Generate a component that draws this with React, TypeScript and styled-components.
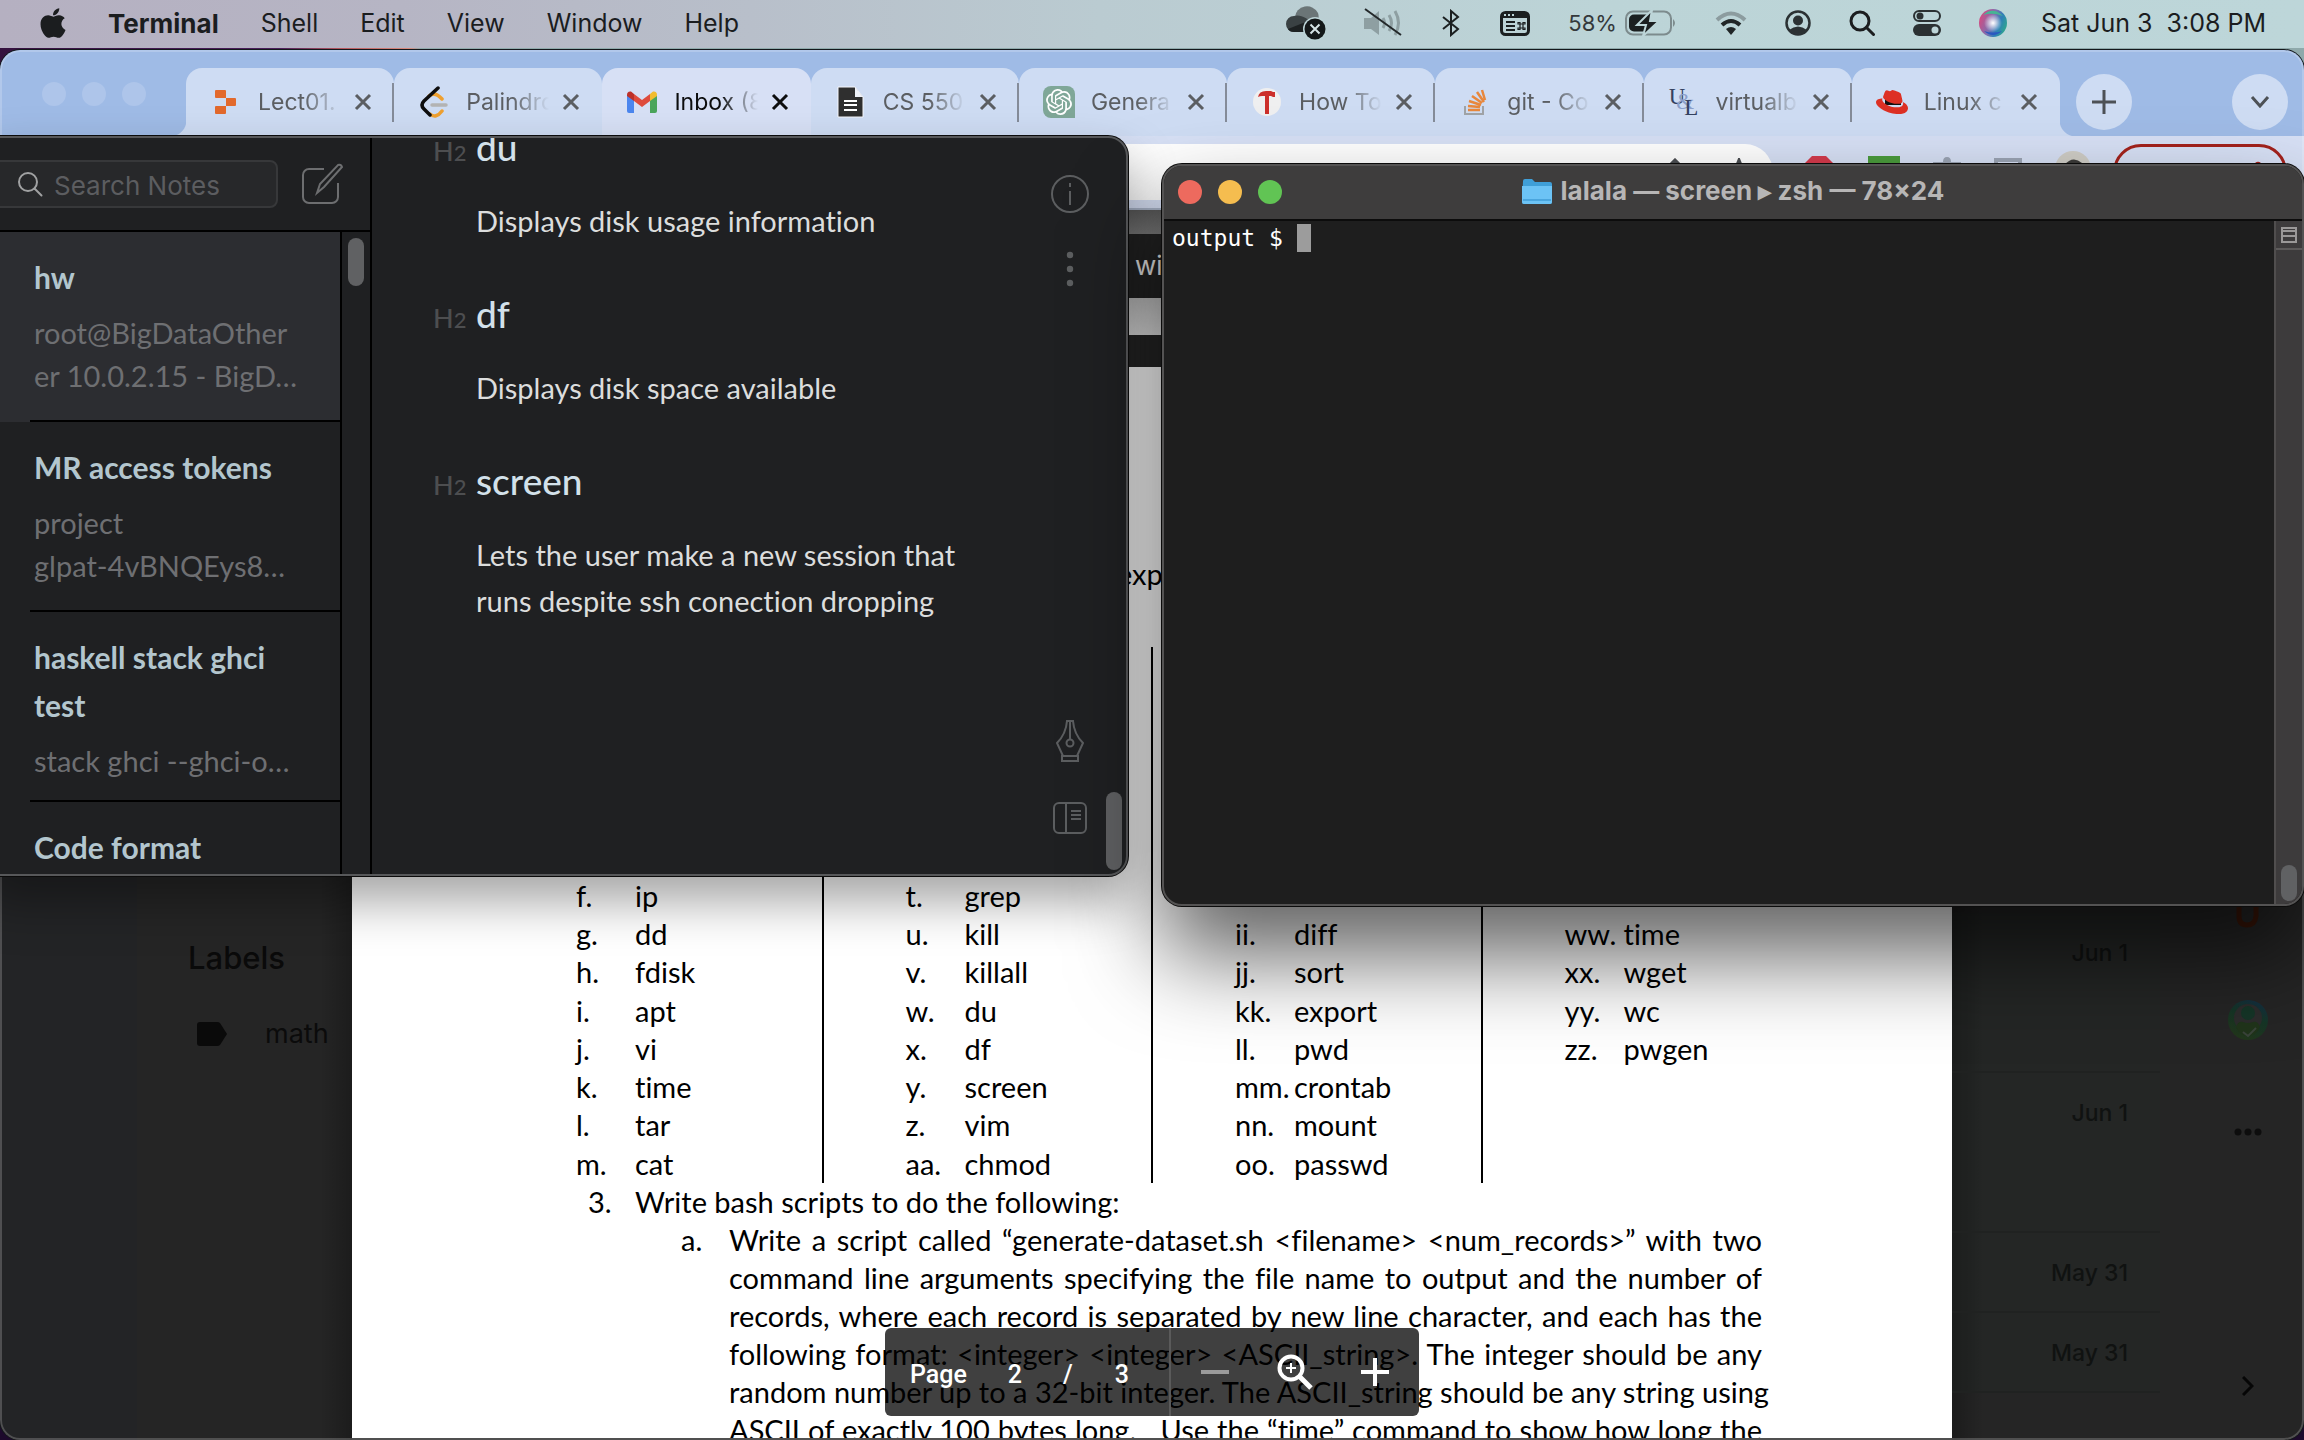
import React from 'react';
import styled, { createGlobalStyle } from 'styled-components';
import { FaApple, FaRedhat } from 'react-icons/fa';
import { SiOpenai } from 'react-icons/si';

const ui = '"Inter", "Liberation Sans", sans-serif';
const humanist = '"Lato", "Open Sans", sans-serif';

const GlobalStyle = createGlobalStyle`
  * { box-sizing: border-box; }
  html, body { margin: 0; }
  body { overflow: hidden; background: #1d0f2b; font-family: ${ui}; }
  button { margin: 0; padding: 0; border: 0; background: none; color: inherit; font: inherit; }
  input { margin: 0; padding: 0; border: 0; background: none; color: inherit; font: inherit; outline: 0; }
  ul, ol, p, h2, h3 { margin: 0; padding: 0; list-style: none; font-weight: inherit; }
  svg { display: block; flex: none; }
`;

/* ---------- desktop and menu bar ---------- */

const Desktop = styled.div`
  position: relative;
  display: flex;
  flex-direction: column;
  height: 100vh;
  overflow: hidden;
  background: linear-gradient(90deg, #35123f 0, #4b1f5c 280px, #b5555c 340px, #d98a7c 410px, #8fa9ab 420px, #8fa9ab 100%) top / 100% 80px no-repeat #1d0a2c;
`;

const MenuBar = styled.header`
  display: flex;
  justify-content: space-between;
  align-items: center;
  flex: none;
  height: 48px;
  padding: 0 38px 2px 40px;
  color: #1b1d1f;
  font-size: 25px;
  background: linear-gradient(90deg, #b5b0c1 0, #b6b5c4 400px, #b8bfca 750px, #bacbd1 1100px, #bcd4d7 1600px, #bdd6d9 100%);
`;

const MenuItems = styled.nav`
  display: flex;
  align-items: center;
  gap: 42px;
`;

const AppleMark = styled(FaApple)`
  width: 26px;
  height: 34px;
`;

const MenuButton = styled.button<{ $strong?: boolean }>`
  font-size: ${(p) => (p.$strong ? 26 : 25)}px;
  font-weight: ${(p) => (p.$strong ? 700 : 400)};
`;

const StatusItems = styled.div`
  display: flex;
  align-items: center;
  gap: 38px;
`;

const BatteryStatus = styled.div`
  display: flex;
  align-items: center;
  gap: 8px;
  font-size: 22px;
  color: #34393b;
`;

const Clock = styled.time`
  white-space: pre;
  margin-left: -4px;
`;

/* ---------- browser window ---------- */

const Browser = styled.main`
  position: relative;
  display: flex;
  flex-direction: column;
  flex: 1;
  min-height: 0;
  margin-top: 2px;
  border-radius: 20px;
  overflow: hidden;
  background: #252525;
  box-shadow: 0 0 0 1px #14181c;

  &::after {
    content: '';
    position: absolute;
    inset: 0;
    border-radius: 20px;
    box-shadow: inset 0 0 0 2px rgba(255, 255, 255, 0.2);
    pointer-events: none;
  }
`;

const TabStrip = styled.div`
  display: flex;
  flex: none;
  height: 86px;
  padding-top: 18px;
  background: #9fbbe6;
`;

const StripStart = styled.div`
  display: flex;
  gap: 16px;
  width: 186px;
  padding: 14px 0 0 42px;
  background: radial-gradient(circle at 0 0, transparent 16px, #cedcf3 17px) bottom right / 16px 16px no-repeat;
`;

const StripEnd = styled.div`
  display: flex;
  justify-content: space-between;
  width: 244px;
  padding: 6px 16px;
  background: radial-gradient(circle at 100% 0, transparent 16px, #cedcf3 17px) bottom left / 16px 16px no-repeat;
`;

const Light = styled.span<{ $color: string }>`
  width: 24px;
  height: 24px;
  border-radius: 50%;
  background: ${(p) => p.$color};
`;

const RoundButton = styled.button`
  display: grid;
  place-items: center;
  width: 56px;
  height: 56px;
  border-radius: 50%;
  background: #cedcf3;
  color: #4d5156;
`;

const Tabs = styled.div`
  display: flex;
  flex: 1;
  min-width: 0;
`;

const Tab = styled.div<{ $active?: boolean; $divider?: boolean }>`
  display: flex;
  align-items: center;
  flex: 1;
  min-width: 0;
  padding: 0 22px 0 24px;
  border-radius: 16px 16px 0 0;
  color: ${(p) => (p.$active ? '#0c0d0e' : '#5b5e62')};
  background:
    linear-gradient(#858c99, #858c99) right 15px / 2px ${(p) => (p.$divider ? '39px' : '0')} no-repeat,
    ${(p) => (p.$active ? '#d7e0f5' : '#cedcf3')};
`;

const TabIcon = styled.span`
  display: grid;
  place-items: center;
  width: 32px;
  flex: none;
`;

const TabLabel = styled.span`
  flex: 1;
  min-width: 0;
  margin: 0 13px 0 16px;
  overflow: hidden;
  white-space: nowrap;
  font-size: 23px;
  line-height: 32px;
  mask-image: linear-gradient(90deg, #000 55%, transparent 100%);
`;

const AddressRow = styled.div`
  display: flex;
  flex: none;
  height: 74px;
  padding: 8px 17px 10px;
  background: #d7e0f5;
  border-bottom: 2px solid #a9b4c8;
`;

const AddressBox = styled.div`
  display: flex;
  justify-content: flex-end;
  gap: 32px;
  flex: 1;
  padding: 14px 18px 0 0;
  border-radius: 28px;
  height: 56px;
  background: #fff;
  color: #4a4d51;
`;

const Extensions = styled.div`
  display: flex;
  justify-content: space-around;
  width: 320px;
  margin: 0 6px 0 14px;
`;

const UpdatePill = styled.button`
  display: flex;
  justify-content: flex-end;
  width: 174px;
  height: 56px;
  padding: 14px 22px;
  border: 3px solid #a3221c;
  border-radius: 28px;
`;

/* ---------- mail page behind the viewer ---------- */

const Viewer = styled.div`
  display: flex;
  flex: 1;
  min-height: 0;
  color: #0a0a0a;
`;

const MailNav = styled.aside`
  flex: 1 1 352px;
  min-width: 0;
  padding: 724px 0 0 188px;
  background:
    linear-gradient(90deg, transparent, rgba(0, 0, 0, 0.25)) right / 32px 100% no-repeat,
    linear-gradient(90deg, #232426 137px, #252525 137px);
`;

const NavTitle = styled.h2`
  font: 500 31px/48px ${ui};
`;

const NavLink = styled.a`
  display: flex;
  align-items: center;
  gap: 38px;
  padding: 32px 0 0 9px;
  color: #0b0b0b;
  font-size: 27px;
  line-height: 40px;
  text-decoration: none;
`;

const MailSide = styled.aside`
  display: flex;
  flex: 1 1 352px;
  min-width: 0;
  background: linear-gradient(270deg, transparent, rgba(0, 0, 0, 0.25)) left / 32px 100% no-repeat #252525;
`;

const MailList = styled.ul`
  width: 208px;
  flex: none;
  padding-top: 703px;
`;

const MailRow = styled.li<{ $tall?: boolean }>`
  height: ${(p) => (p.$tall ? 160 : 80)}px;
  padding: 24px 32px 0 0;
  border-bottom: 2px solid #202221;
  background: rgba(30, 42, 36, 0.16);
  color: #101211;
  font: 500 23px/32px ${ui};
  text-align: right;
`;

const AddOns = styled.div`
  display: flex;
  flex: 1;
  flex-direction: column;
  align-items: center;
  padding: 684px 0 40px 32px;
`;

const Spacer = styled.div<{ $size?: number }>`
  ${(p) => (p.$size ? `height: ${p.$size}px; flex: none;` : 'flex: 1;')}
`;

/* ---------- PDF document ---------- */

const PdfColumn = styled.section`
  position: relative;
  width: 1600px;
  flex: none;
  color: #000;
  font: 29px/38px ${humanist};
  font-variant-ligatures: none;
`;

const MailStrip = styled.div`
  height: 24px;
  background: linear-gradient(#5a5a5a, #787878);
`;

const ViewerBar = styled.div`
  height: 64px;
  padding: 13px 0 0 783px;
  background: #222;
  color: #e8e8e8;
  font: 26px/38px ${ui};
`;

const PreviousPage = styled.div`
  height: 37px;
  margin-bottom: 32px;
  background: linear-gradient(#c0c0c0, #e0e0e0);
`;

const Page = styled.article`
  padding: 188px 190px 0 142px;
  height: 1071px;
  overflow: hidden;
  background: #fff;
`;

const Prompt = styled.p`
  padding-left: 623px;
  margin-bottom: 54px;
`;

const Columns = styled.div`
  display: grid;
  grid-template-columns: repeat(4, 1fr);
  height: 536px;
  margin-right: -50px;
`;

const CommandList = styled.ol`
  display: grid;
  grid-template-rows: repeat(14, 1fr);
  height: 536px;
  padding-left: 82px;

  &:not(:last-child) { border-right: 2px solid #000; }
`;

const Command = styled.li<{ $row: number }>`
  grid-row: ${(p) => p.$row};
  display: grid;
  grid-template-columns: 59px 1fr;
`;

const Task = styled.div<{ $indent: number; $marker: number }>`
  display: grid;
  grid-template-columns: ${(p) => p.$marker}px minmax(0, 1fr);
  padding-left: ${(p) => p.$indent}px;
`;

const Line = styled.span`
  display: block;
  white-space: nowrap;
  text-align: justify;
  text-align-last: justify;
`;

const PdfControls = styled.div`
  position: absolute;
  left: 533px;
  bottom: 24px;
  display: flex;
  align-items: center;
  width: 534px;
  height: 88px;
  border-radius: 6px;
  background: rgba(0, 0, 0, 0.75);
  color: #fff;
  font: 500 25px/32px "Roboto", sans-serif;
`;

const PageField = styled.div`
  display: flex;
  align-items: center;
  width: 286px;
  height: 88px;
  padding: 5px 0 0 25px;
  border-right: 2px solid #5a5a5a;
`;

const PageInput = styled.input`
  width: 96px;
  text-align: center;
`;

const PageTotal = styled.span`
  margin-left: 42px;
`;

const ZoomButtons = styled.div`
  display: flex;
  justify-content: space-between;
  flex: 1;
  padding: 0 28px;
`;

/* ---------- notes window ---------- */

const NotesWindow = styled.section`
  position: absolute;
  left: -20px;
  top: 136px;
  display: flex;
  width: 1148px;
  height: 740px;
  border: 2px solid #57585a;
  border-radius: 20px;
  overflow: hidden;
  background: #1f2022;
  box-shadow: 0 0 0 1px #0b0b0b, 0 25px 50px rgba(0, 0, 0, 0.36);
  font-family: ${humanist};
  font-variant-ligatures: none;
`;

const Sidebar = styled.div`
  display: flex;
  flex-direction: column;
  width: 390px;
  flex: none;
  border-right: 2px solid #000;
`;

const SearchRow = styled.div`
  display: flex;
  align-items: center;
  gap: 24px;
  flex: none;
  height: 94px;
  padding: 0 26px 0 0;
  border-bottom: 2px solid #000;
  color: #6d6e70;
`;

const SearchField = styled.label`
  display: flex;
  align-items: center;
  gap: 11px;
  flex: 1;
  height: 48px;
  padding-left: 33px;
  border: 2px solid #37383a;
  border-radius: 8px;
  background: #27282a;
  color: #a0a1a2;
`;

const SearchInput = styled.input`
  width: 200px;
  padding-top: 3px;
  font: 26px/32px ${ui};
  &::placeholder { color: #5c5d60; opacity: 1; }
`;

const ListPane = styled.div`
  display: flex;
  flex: 1;
  min-height: 0;
`;

const NoteList = styled.ul`
  width: 360px;
  border-right: 2px solid #000;
  overflow: hidden;
`;

const NoteItem = styled.li<{ $selected?: boolean }>`
  height: 190px;
  padding-left: 48px;
  background: ${(p) => (p.$selected ? '#2c2d31' : 'transparent')};
`;

const NoteBody = styled.div`
  height: 190px;
  padding: 21px 20px 0 4px;
  border-bottom: 2px solid #000;
`;

const NoteTitle = styled.h3`
  color: #b3c6ce;
  font-size: 30px;
  font-weight: 700;
  line-height: 48px;
`;

const NotePreview = styled.p`
  margin-top: 10px;
  color: #6e6f72;
  font-size: 29px;
  line-height: 43px;
  white-space: pre-line;
`;

const Thumb = styled.span<{ $height: number }>`
  width: 16px;
  height: ${(p) => p.$height}px;
  border-radius: 8px;
  background: #606163;
`;

const Track = styled.div<{ $end?: boolean }>`
  display: flex;
  justify-content: center;
  align-items: ${(p) => (p.$end ? 'flex-end' : 'flex-start')};
  width: ${(p) => (p.$end ? 24 : 28)}px;
  padding: 6px 0 4px;
`;

const Editor = styled.div`
  flex: 1;
  min-width: 0;
  overflow: hidden;
`;

const Entry = styled.div`
  width: 660px;
  margin: -15px 0 61px;
  padding-left: 61px;
`;

const EntryHeading = styled.h2`
  display: grid;
  grid-template-columns: 43px 1fr;
  align-items: baseline;
  height: 48px;
  margin-bottom: 27px;
  color: #d3e1ea;
  font-size: 37px;
  font-weight: 500;
  line-height: 48px;
`;

const Level = styled.span`
  color: #4d4e50;
  font-size: 27px;
  small { font-size: 22px; }
`;

const EntryText = styled.p`
  padding-left: 43px;
  color: #dcdddd;
  font-size: 29px;
  line-height: 46px;
  white-space: pre-line;
`;

const ToolRail = styled.div`
  display: flex;
  flex-direction: column;
  align-items: center;
  width: 40px;
  margin-right: 12px;
  padding: 37px 0 40px;
  color: #5c5e60;
`;

/* ---------- terminal window ---------- */

const TerminalWindow = styled.section`
  position: absolute;
  top: 164px;
  right: 0;
  display: flex;
  flex-direction: column;
  width: 1142px;
  height: 742px;
  border: 2px solid #545353;
  border-radius: 20px;
  overflow: hidden;
  background: #1e1e1e;
  box-shadow: 0 0 0 1px #0b0b0b, 0 50px 90px rgba(0, 0, 0, 0.62);
`;

const TitleBar = styled.div`
  display: grid;
  grid-template-columns: 1fr auto 1fr;
  align-items: center;
  flex: none;
  height: 55px;
  padding: 0 14px 2px;
  border-bottom: 2px solid #0c0c0c;
  background: #3e3d3d;
`;

const Lights = styled.div`
  display: flex;
  gap: 16px;
`;

const Title = styled.h2`
  display: flex;
  align-items: center;
  gap: 9px;
  padding-bottom: 2px;
  color: #b7b6b6;
  font-size: 26px;
  font-weight: 700;
  line-height: 32px;
`;

const TerminalBody = styled.div`
  display: flex;
  flex: 1;
  min-height: 0;
`;

const Shell = styled.pre`
  display: flex;
  flex: 1;
  margin: 0;
  padding: 3px 8px;
  color: #fff;
  font: 23px/28px "DejaVu Sans Mono", monospace;
`;

const Cursor = styled.span`
  width: 14px;
  height: 28px;
  background: #9c9c9c;
`;

const Gutter = styled.div`
  display: flex;
  flex-direction: column;
  justify-content: space-between;
  align-items: center;
  width: 28px;
  padding-bottom: 3px;
  border-left: 2px solid #504e4e;
  background: #3d3b3c;
`;

const SplitButton = styled.button`
  display: grid;
  place-items: center;
  width: 26px;
  height: 29px;
  border-bottom: 2px solid #5c5a5a;
  color: #9a9898;
`;

/* ---------- small drawings ---------- */

const Cross = () => (
  <svg width="18" height="18" viewBox="0 0 18 18" fill="none" stroke="currentColor" strokeWidth="3">
    <path d="M2 2l14 14M16 2L2 16" />
  </svg>
);

const CloudOff = () => (
  <svg width="40" height="36" viewBox="0 0 40 36">
    <path d="M9 12a12 11 0 0 1 23-4c1 3 1 7-1 9L12 18z" fill="#6b7577" />
    <path d="M8 11c6-2 14 2 19 8l-8 8H8a8 8 0 0 1 0-16z" fill="#3a4143" />
    <path d="M2 24l20-8 6 6-8 5H8c-3 0-5-1-6-3z" fill="#1d2122" />
    <circle cx="29" cy="24" r="12" fill="#bcd3d6" />
    <circle cx="29" cy="24" r="10.500" fill="#141819" />
    <path d="M24.500 19.500l9 9m0-9l-9 9" stroke="#d6e4e6" strokeWidth="2" />
  </svg>
);

const Muted = () => (
  <svg width="38" height="30" viewBox="0 0 38 30" fill="none">
    <path d="M0 10h7l8-7v24l-8-6H0z" fill="#8e9fa2" />
    <path d="M19 10q3 5 0 10M25 7q5 8 0 16M31 3q7 12 0 24" stroke="#8e9fa2" strokeWidth="3" />
    <path d="M1 1l36 26" stroke="#23282a" strokeWidth="2" />
  </svg>
);

const BluetoothIcon = () => (
  <svg width="22" height="28" viewBox="0 0 22 28" fill="none" stroke="#1b1f20" strokeWidth="2">
    <path d="M3 8l15 12-7 6V2l7 6L3 20" />
  </svg>
);

const ShortcutIcon = () => (
  <svg width="30" height="25" viewBox="0 0 30 25" fill="none">
    <rect x="1.500" y="1.500" width="27" height="22" rx="4" stroke="#1b1f20" strokeWidth="3" />
    <path d="M2 2h26v5H2z" fill="#1b1f20" />
    <path d="M4 4h2M8 4h2M12 4h2" stroke="#bdd5d8" strokeWidth="2" />
    <path d="M6 11h9M6 15h9M6 19h9" stroke="#1b1f20" strokeWidth="2" />
    <path d="M20 13h3v4h-3zM20 13v-1.500h-2V13zM23 13v-1.500h2V13zM20 17v1.500h-2V17zM23 17v1.500h2V17z" stroke="#1b1f20" strokeWidth="1.200" />
  </svg>
);

const Battery = () => (
  <svg width="52" height="26" viewBox="0 0 52 26" fill="none">
    <rect x="1" y="1.500" width="45" height="23" rx="7" stroke="#7d8b8d" strokeWidth="2" />
    <path d="M9 4.500h14v17H9a5 5 0 0 1-5-5v-7a5 5 0 0 1 5-5z" fill="#1b1f20" />
    <path d="M48 9q4 4 0 8z" fill="#7d8b8d" />
    <path d="M27 0L12 15h9l-3 11 16-15h-9z" fill="#1b1f20" stroke="#bdd5d8" strokeWidth="2" />
  </svg>
);

const Wifi = () => (
  <svg width="32" height="24" viewBox="0 0 32 24" fill="none" strokeWidth="4">
    <path d="M2 9q14-13 28 0" stroke="#8c9c9f" />
    <path d="M7 14q9-8 18 0" stroke="#202526" />
    <path d="M11 18q5-4 10 0l-5 6z" fill="#202526" />
  </svg>
);

const UserIcon = () => (
  <svg width="26" height="26" viewBox="0 0 26 26" fill="none">
    <circle cx="13" cy="13" r="11.500" stroke="#2b3133" strokeWidth="2.500" />
    <circle cx="13" cy="10.500" r="5" fill="#2b3133" />
    <path d="M4 20q9-7 18 0-9 8-18 0z" fill="#2b3133" />
  </svg>
);

const Lens = ({ size = 26, width = 3 }: { size?: number; width?: number }) => (
  <svg width={size} height={size} viewBox="0 0 26 26" fill="none" stroke="currentColor" strokeWidth={width}>
    <circle cx="11" cy="11" r="9" />
    <path d="M17.500 17.500l7 7" strokeLinecap="round" />
  </svg>
);

const ControlCenter = () => (
  <svg width="28" height="26" viewBox="0 0 28 26" fill="none">
    <rect x="1" y="1" width="26" height="10" rx="5" stroke="#2b3133" strokeWidth="2" />
    <circle cx="7" cy="6" r="3.500" fill="#2b3133" />
    <rect x="0" y="14" width="28" height="12" rx="6" fill="#2b3133" />
    <circle cx="22" cy="20" r="3.500" fill="#bdd5d8" />
  </svg>
);

const Siri = () => (
  <svg width="28" height="28" viewBox="0 0 28 28">
    <defs>
      <linearGradient id="siri" x1="0" y1=".3" x2="1" y2=".7">
        <stop offset="0" stopColor="#d8497f" />
        <stop offset=".45" stopColor="#7d6fb0" />
        <stop offset=".7" stopColor="#2f7fb8" />
        <stop offset="1" stopColor="#2fa98a" />
      </linearGradient>
      <radialGradient id="glow">
        <stop offset="0" stopColor="#fff" />
        <stop offset="1" stopColor="#fff" stopOpacity="0" />
      </radialGradient>
    </defs>
    <circle cx="14" cy="14" r="14" fill="url(#siri)" />
    <path d="M4 6q10-9 20 1Q14 3 4 6z" fill="#46b494" />
    <path d="M5 22q9 8 18 0-9 3-18 0z" fill="#2b58c0" />
    <circle cx="14" cy="14" r="9" fill="url(#glow)" />
  </svg>
);

const ReplitIcon = () => (
  <svg width="22" height="24" viewBox="0 0 22 24" fill="#e2692c">
    <path d="M1 0h9a1 1 0 0 1 1 1v7H1a1 1 0 0 1-1-1V1a1 1 0 0 1 1-1zM11 8h9a1 1 0 0 1 1 1v6a1 1 0 0 1-1 1h-9zM0 17a1 1 0 0 1 1-1h10v7a1 1 0 0 1-1 1H1a1 1 0 0 1-1-1z" />
  </svg>
);

const LeetCodeIcon = () => (
  <svg width="28" height="32" viewBox="0 0 28 32" fill="none" strokeWidth="3.500" strokeLinecap="round">
    <path d="M9 10q6-5 13 3M10 28q6 5 12-3" stroke="#efa02f" />
    <path d="M18 2L4 15q-4 4 0 8l6 6" stroke="#0e0e0e" />
    <path d="M12 19h14" stroke="#b3b3b3" />
  </svg>
);

const GmailIcon = () => (
  <svg width="30" height="22" viewBox="0 0 30 22">
    <path d="M0 4v16a2 2 0 0 0 2 2h5V9z" fill="#4c86ee" />
    <path d="M30 4v16a2 2 0 0 1-2 2h-5V9z" fill="#4ba55b" />
    <path d="M7 3l8 6 8-6v7l-8 6-8-6z" fill="#de4b3c" />
    <path d="M0 4q0-4 4-3.500L7 3v7L0 5z" fill="#bd3129" />
    <path d="M30 4q0-4-4-3.500L23 3v7l7-5z" fill="#f2bc2d" />
  </svg>
);

const DocIcon = () => (
  <svg width="28" height="32" viewBox="0 0 28 32">
    <path d="M1 1h17l8 10v20H1z" fill="#2f2f2f" stroke="#f6f7fb" strokeWidth="1" />
    <path d="M18 1v10h8" fill="#eef1f8" />
    <path d="M7 15h13M7 19h13M7 24h13" stroke="#fff" strokeWidth="2" />
  </svg>
);

const GptTile = styled.span`
  display: grid;
  place-items: center;
  width: 32px;
  height: 32px;
  border-radius: 8px 8px 0 8px;
  background: #7fa798;
  color: #fff;
`;

const HammerIcon = () => (
  <svg width="28" height="28" viewBox="0 0 28 28">
    <circle cx="14" cy="14" r="14" fill="#efeff0" />
    <path d="M5 9q1-6 8-6h5l2 1h2v5h-2l-2-1h-2v18h-4V8H9q-2 0-4 1z" fill="#cc2f2b" />
  </svg>
);

const StackIcon = () => (
  <svg width="24" height="26" viewBox="0 0 24 26" fill="none" strokeWidth="2">
    <path d="M2 17v8h18v-8" stroke="#a0a3a6" />
    <path d="M5 21h12M5 17l12 1M6 12l12 4M9 7l10 7M14 3l7 10M19 1l3 10" stroke="#e8873c" strokeWidth="2.500" />
  </svg>
);

const MonogramText = styled.span`
  display: flex;
  color: #34425f;
  font: 23px/20px "Liberation Serif", serif;
  span:nth-child(2) { padding-top: 5px; margin-left: -9px; color: #8ba0cb; }
  span:nth-child(3) { padding-top: 11px; margin-left: -10px; }
`;

const RedHat = styled.span`
  display: grid;
  color: #dd3024;
  background: linear-gradient(#111, #111) 9px 10px / 16px 9px no-repeat;
`;

const FolderIcon = () => (
  <svg width="30" height="26" viewBox="0 0 30 26">
    <path d="M1 3a2 2 0 0 1 2-2h7l3 3h15a2 2 0 0 1 2 2v18a2 2 0 0 1-2 2H2a2 2 0 0 1-2-2z" fill="#3f9fd8" />
    <path d="M0 8h30v16a2 2 0 0 1-2 2H2a2 2 0 0 1-2-2z" fill="#6cc3f5" />
    <path d="M1 22h28" stroke="#4aa6de" strokeWidth="2" />
  </svg>
);

const ComposeIcon = () => (
  <svg width="42" height="42" viewBox="0 0 42 42" fill="none" stroke="currentColor" strokeWidth="2">
    <path d="M22 6H7a6 6 0 0 0-6 6v22a6 6 0 0 0 6 6h23a6 6 0 0 0 6-6V20" />
    <path d="M15 30l3-9L36 2q3-1 4 2L22 24z" />
  </svg>
);

const InfoIcon = () => (
  <svg width="38" height="38" viewBox="0 0 38 38" fill="none" stroke="currentColor" strokeWidth="2">
    <circle cx="19" cy="19" r="18" />
    <path d="M19 8v4M19 16v14" />
  </svg>
);

const DotsIcon = ({ color = 'currentColor' }: { color?: string }) => (
  <svg width="8" height="36" viewBox="0 0 8 36" fill={color}>
    <circle cx="4" cy="4" r="3.200" /><circle cx="4" cy="18" r="3.200" /><circle cx="4" cy="32" r="3.200" />
  </svg>
);

const PenIcon = () => (
  <svg width="28" height="42" viewBox="0 0 28 42" fill="none" stroke="currentColor" strokeWidth="2">
    <path d="M11 1h6q1 13 10 22l-6 13H7L1 23Q10 14 11 1zM6 36h16v5H6zM14 1v18" />
    <circle cx="14" cy="23" r="3.500" />
  </svg>
);

const PanelIcon = () => (
  <svg width="34" height="32" viewBox="0 0 34 32" fill="none" stroke="currentColor" strokeWidth="2">
    <rect x="1" y="1" width="32" height="30" rx="5" />
    <path d="M13 1v30M18 9h10M18 13h10M18 17h10" />
  </svg>
);

const ContactIcon = () => (
  <svg width="40" height="40" viewBox="0 0 40 40">
    <defs>
      <linearGradient id="contact" x1=".3" y1="1" x2=".7" y2="0">
        <stop offset="0" stopColor="#22361a" />
        <stop offset=".6" stopColor="#153527" />
        <stop offset="1" stopColor="#142f40" />
      </linearGradient>
    </defs>
    <circle cx="20" cy="20" r="20" fill="url(#contact)" />
    <circle cx="20" cy="18" r="14" fill="#2c2c2c" />
    <circle cx="20" cy="13" r="7" fill="#153527" />
    <path d="M8 27q2-6 7-5 5 2 10 0 5-1 7 5-4 9-12 9T8 27z" fill="#20341a" />
    <path d="M15 32l5 4 8-8" fill="none" stroke="#3a443a" strokeWidth="2" />
  </svg>
);

/* ---------- content ---------- */

const tabs = [
  { label: 'Lect01.', icon: <ReplitIcon />, divider: true },
  { label: 'Palindro', icon: <LeetCodeIcon /> },
  { label: 'Inbox (8', icon: <GmailIcon />, active: true },
  { label: 'CS 550', icon: <DocIcon />, divider: true },
  { label: 'Genera', icon: <GptTile><SiOpenai size={26} /></GptTile>, divider: true },
  { label: 'How To', icon: <HammerIcon />, divider: true },
  { label: 'git - Co', icon: <StackIcon />, divider: true },
  { label: 'virtualb', icon: <MonogramText><span>U</span><span>&amp;</span><span>L</span></MonogramText>, divider: true },
  { label: 'Linux c', icon: <RedHat><FaRedhat size={32} /></RedHat> },
];

const notes = [
  { title: 'hw', preview: 'root@BigDataOther\ner 10.0.2.15 - BigD…', selected: true },
  { title: 'MR access tokens', preview: 'project\nglpat-4vBNQEys8…' },
  { title: 'haskell stack ghci test', preview: 'stack ghci --ghci-o…' },
  { title: 'Code format', preview: '' },
];

const entries = [
  { name: 'du', text: 'Displays disk usage information' },
  { name: 'df', text: 'Displays disk space available' },
  { name: 'screen', text: 'Lets the user make a new session that\nruns despite ssh conection dropping' },
];

const columns: { first: number; items: [string, string][] }[] = [
  { first: 7, items: [['f.', 'ip'], ['g.', 'dd'], ['h.', 'fdisk'], ['i.', 'apt'], ['j.', 'vi'], ['k.', 'time'], ['l.', 'tar'], ['m.', 'cat']] },
  { first: 7, items: [['t.', 'grep'], ['u.', 'kill'], ['v.', 'killall'], ['w.', 'du'], ['x.', 'df'], ['y.', 'screen'], ['z.', 'vim'], ['aa.', 'chmod']] },
  { first: 8, items: [['ii.', 'diff'], ['jj.', 'sort'], ['kk.', 'export'], ['ll.', 'pwd'], ['mm.', 'crontab'], ['nn.', 'mount'], ['oo.', 'passwd']] },
  { first: 8, items: [['ww.', 'time'], ['xx.', 'wget'], ['yy.', 'wc'], ['zz.', 'pwgen']] },
];

const scriptTask = [
  'Write a script called “generate-dataset.sh <filename> <num_records>” with two',
  'command line arguments specifying the file name to output and the number of',
  'records, where each record is separated by new line character, and each has the',
  'following format: <integer> <integer> <ASCII_string>. The integer should be any',
  'random number up to a 32-bit integer. The ASCII_string should be any string using',
  'ASCII of exactly 100 bytes long.\u00a0\u00a0 Use the “time” command to show how long the',
];

const mail = [
  { date: 'Jun 1', tall: true },
  { date: 'Jun 1', tall: true },
  { date: 'May 31' },
  { date: 'May 31' },
];

export default function App() {
  return (
    <Desktop>
      <GlobalStyle />
      <MenuBar>
        <MenuItems>
          <AppleMark />
          <MenuButton $strong>Terminal</MenuButton>
          {['Shell', 'Edit', 'View', 'Window', 'Help'].map((m) => <MenuButton key={m}>{m}</MenuButton>)}
        </MenuItems>
        <StatusItems>
          <CloudOff />
          <Muted />
          <BluetoothIcon />
          <ShortcutIcon />
          <BatteryStatus>58% <Battery /></BatteryStatus>
          <Wifi />
          <UserIcon />
          <Lens />
          <ControlCenter />
          <Siri />
          <Clock>{'Sat Jun 3  3:08 PM'}</Clock>
        </StatusItems>
      </MenuBar>

      <Browser>
        <TabStrip>
          <StripStart>
            <Light $color="#aec5ea" /><Light $color="#aec5ea" /><Light $color="#aec5ea" />
          </StripStart>
          <Tabs>
            {tabs.map((t) => (
              <Tab key={t.label} $active={t.active} $divider={t.divider}>
                <TabIcon>{t.icon}</TabIcon>
                <TabLabel>{t.label}</TabLabel>
                <button aria-label="Close tab"><Cross /></button>
              </Tab>
            ))}
          </Tabs>
          <StripEnd>
            <RoundButton aria-label="New tab">
              <svg width="24" height="24" viewBox="0 0 24 24" stroke="currentColor" strokeWidth="3"><path d="M12 0v24M0 12h24" /></svg>
            </RoundButton>
            <RoundButton aria-label="Search tabs">
              <svg width="20" height="12" viewBox="0 0 20 12" fill="none" stroke="currentColor" strokeWidth="3"><path d="M2 1l8 9 8-9" /></svg>
            </RoundButton>
          </StripEnd>
        </TabStrip>
        <AddressRow>
          <AddressBox>
            <svg width="32" height="32" viewBox="0 0 32 32" fill="none" stroke="currentColor" strokeWidth="3"><path d="M16 20V2M9 9l7-7 7 7M8 14H5v16h22V14h-3" /></svg>
            <svg width="32" height="32" viewBox="0 0 32 32" fill="none" stroke="currentColor" strokeWidth="3"><path d="M16 2l4 10 10 1-8 7 3 10-9-6-9 6 3-10-8-7 10-1z" /></svg>
          </AddressBox>
          <Extensions>
            <svg width="32" height="56" viewBox="0 0 32 56"><path d="M9 12h14l9 9v14l-9 9H9l-9-9V21z" fill="#d43a4c" /></svg>
            <svg width="32" height="56" viewBox="0 0 32 56"><path d="M0 12h32v32H0z" fill="#4a9b3c" /></svg>
            <svg width="28" height="56" viewBox="0 0 28 56"><path d="M10 18q0-5 4-5t4 5h10v26H0V18z" fill="#9ba4b4" /></svg>
            <svg width="28" height="56" viewBox="0 0 28 56" fill="none"><path d="M2 16h24v24H2z" stroke="#9ba4b4" strokeWidth="4" /></svg>
            <svg width="36" height="56" viewBox="0 0 36 56"><circle cx="18" cy="25" r="18" fill="#cfcdc6" /><path d="M9 21q9-10 18-2l-3 6H9z" fill="#3b3a38" /></svg>
          </Extensions>
          <UpdatePill aria-label="Browser menu"><DotsIcon color="#a3221c" /></UpdatePill>
        </AddressRow>

        <Viewer>
          <MailNav>
            <NavTitle>Labels</NavTitle>
            <NavLink href="#math">
              <svg width="30" height="24" viewBox="0 0 30 24" fill="#0a0a0a"><path d="M3 0h17q2 0 3 1l7 11-7 11q-1 1-3 1H3q-3 0-3-3V3q0-3 3-3z" /></svg>
              math
            </NavLink>
          </MailNav>

          <PdfColumn>
            <MailStrip />
            <ViewerBar>wi</ViewerBar>
            <PreviousPage />
            <Page>
              <Prompt>exp</Prompt>
              <Columns>
                {columns.map((c) => (
                  <CommandList key={c.items[0][0]}>
                    {c.items.map(([mark, name], i) => (
                      <Command key={mark} $row={c.first + i}><span>{mark}</span><span>{name}</span></Command>
                    ))}
                  </CommandList>
                ))}
              </Columns>
              <Task $indent={94} $marker={47}>
                <span>3.</span><span>Write bash scripts to do the following:</span>
              </Task>
              <Task $indent={187} $marker={48}>
                <span>a.</span>
                <p>{scriptTask.map((l) => <Line key={l}>{l}</Line>)}</p>
              </Task>
            </Page>
            <PdfControls>
              <PageField>
                <label htmlFor="page">Page</label>
                <PageInput id="page" defaultValue="2" />
                <span>/</span>
                <PageTotal>3</PageTotal>
              </PageField>
              <ZoomButtons>
                <button aria-label="Zoom out">
                  <svg width="32" height="36" viewBox="0 0 32 36" stroke="#9b9b9b" strokeWidth="4"><path d="M2 18h28" /></svg>
                </button>
                <button aria-label="Fit page">
                  <svg width="36" height="36" viewBox="0 0 36 36" fill="none" stroke="#fff">
                    <circle cx="14" cy="14" r="11.500" strokeWidth="4" />
                    <path d="M23 23l11 11" strokeWidth="5" />
                    <path d="M14 9v10M9 14h10" strokeWidth="2" />
                  </svg>
                </button>
                <button aria-label="Zoom in">
                  <svg width="32" height="36" viewBox="0 0 32 36" stroke="#fff" strokeWidth="4"><path d="M2 18h28M16 4v28" /></svg>
                </button>
              </ZoomButtons>
            </PdfControls>
          </PdfColumn>

          <MailSide>
            <MailList>
              {mail.map((m, i) => <MailRow key={i} $tall={m.tall}>{m.date}</MailRow>)}
            </MailList>
            <AddOns>
              <svg width="24" height="34" viewBox="0 0 24 34" fill="none" stroke="#3a1608" strokeWidth="5"><path d="M3 2v20q0 9 8 9t9-9V2" /></svg>
              <Spacer $size={72} />
              <ContactIcon />
              <Spacer $size={88} />
              <svg width="28" height="8" viewBox="0 0 28 8" fill="#0d0d0d"><circle cx="4" cy="4" r="3.500" /><circle cx="14" cy="4" r="3.500" /><circle cx="24" cy="4" r="3.500" /></svg>
              <Spacer />
              <svg width="12" height="20" viewBox="0 0 12 20" fill="none" stroke="#060606" strokeWidth="3"><path d="M1 1l9 9-9 9" /></svg>
              <Spacer $size={4} />
            </AddOns>
          </MailSide>
        </Viewer>
      </Browser>

      <NotesWindow>
        <Sidebar>
          <SearchRow>
            <SearchField>
              <Lens size={26} width={2} />
              <SearchInput placeholder="Search Notes" aria-label="Search Notes" />
            </SearchField>
            <button aria-label="New note"><ComposeIcon /></button>
          </SearchRow>
          <ListPane>
            <NoteList>
              {notes.map((n) => (
                <NoteItem key={n.title} $selected={n.selected}>
                  <NoteBody>
                    <NoteTitle>{n.title}</NoteTitle>
                    <NotePreview>{n.preview}</NotePreview>
                  </NoteBody>
                </NoteItem>
              ))}
            </NoteList>
            <Track><Thumb $height={48} /></Track>
          </ListPane>
        </Sidebar>
        <Editor>
          {entries.map((e) => (
            <Entry key={e.name}>
              <EntryHeading><Level>H<small>2</small></Level>{e.name}</EntryHeading>
              <EntryText>{e.text}</EntryText>
            </Entry>
          ))}
        </Editor>
        <ToolRail>
          <InfoIcon />
          <Spacer $size={38} />
          <DotsIcon />
          <Spacer />
          <PenIcon />
          <Spacer $size={40} />
          <PanelIcon />
        </ToolRail>
        <Track $end><Thumb $height={78} /></Track>
      </NotesWindow>

      <TerminalWindow>
        <TitleBar>
          <Lights><Light $color="#ed6a5e" /><Light $color="#f5bd4f" /><Light $color="#61c454" /></Lights>
          <Title><FolderIcon />lalala — screen ▸ zsh — 78×24</Title>
        </TitleBar>
        <TerminalBody>
          <Shell>output $ <Cursor /></Shell>
          <Gutter>
            <SplitButton aria-label="Split pane">
              <svg width="16" height="16" viewBox="0 0 16 16" fill="none" stroke="currentColor" strokeWidth="2"><path d="M1 1h14v14H1zM1 4h14M1 9h14" /></svg>
            </SplitButton>
            <Thumb $height={36} />
          </Gutter>
        </TerminalBody>
      </TerminalWindow>
    </Desktop>
  );
}
